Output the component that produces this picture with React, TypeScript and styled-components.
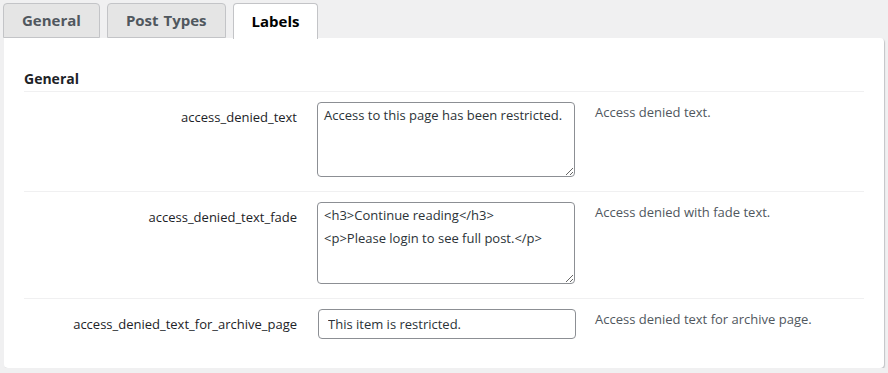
import styled, { createGlobalStyle } from "styled-components";

const GlobalStyle = createGlobalStyle`
  html, body {
    margin: 0;
    padding: 0;
    background: #f0f0f1;
  }
  body {
    font-family: "Open Sans", "Noto Sans", sans-serif;
    font-size: 13px;
    color: #1d2327;
  }
`;

type Field = {
  name: string;
  kind: "textarea" | "input";
  value: string;
  height?: number;
  description: string;
};

const fields: Field[] = [
  {
    name: "access_denied_text",
    kind: "textarea",
    value: "Access to this page has been restricted.",
    height: 75,
    description: "Access denied text.",
  },
  {
    name: "access_denied_text_fade",
    kind: "textarea",
    value: "<h3>Continue reading</h3>\n<p>Please login to see full post.</p>",
    height: 82,
    description: "Access denied with fade text.",
  },
  {
    name: "access_denied_text_for_archive_page",
    kind: "input",
    value: "This item is restricted.",
    description: "Access denied text for archive page.",
  },
];

const tabs = ["General", "Post Types", "Labels"];

export default function App() {
  return (
    <>
      <GlobalStyle />
      <Wrap>
        <TabBar>
          {tabs.map(t => (
            <Tab key={t} $active={t === "Labels"}>
              {t}
            </Tab>
          ))}
        </TabBar>
        <Panel>
          <SectionTitle>General</SectionTitle>
          <FormTable>
            {fields.map(f => (
              <Row key={f.name}>
                <Label>{f.name}</Label>
                <Control>
                  {f.kind === "textarea" ? (
                    <TextArea defaultValue={f.value} style={{ height: f.height }} />
                  ) : (
                    <TextInput defaultValue={f.value} />
                  )}
                </Control>
                <Description>{f.description}</Description>
              </Row>
            ))}
          </FormTable>
        </Panel>
      </Wrap>
    </>
  );
}

const Wrap = styled.div`
  padding: 3px 4px 0 4px;
  width: 880px;
`;

const TabBar = styled.div`
  display: flex;
  gap: 7px;
  margin-left: -1px;
`;

const Tab = styled.div<{ $active?: boolean }>`
  box-sizing: border-box;
  height: ${p => (p.$active ? "36px" : "35px")};
  margin-bottom: ${p => (p.$active ? "-1px" : "0")};
  position: relative;
  z-index: ${p => (p.$active ? 2 : 0)};
  padding: 0 18px 1px;
  display: flex;
  align-items: center;
  font-size: 15px;
  font-weight: 700;
  word-spacing: 1px;
  color: ${p => (p.$active ? "#000" : "#50575e")};
  background: ${p => (p.$active ? "#fff" : "#e5e5e5")};
  border: 1px solid #c3c4c7;
  border-bottom: ${p => (p.$active ? "none" : "1px solid #c3c4c7")};
  border-radius: 4px 4px 0 0;
`;

const Panel = styled.div`
  box-sizing: border-box;
  background: #fff;
  height: 330px;
  border-radius: 0 4px 4px 4px;
  box-shadow: 1px 1px 1px #c3c4c7;
  padding: 30px 20px 0 20px;
  position: relative;
  z-index: 1;
`;

const SectionTitle = styled.h2`
  margin: 0;
  font-size: 14px;
  font-weight: 700;
  color: #1d2327;
  line-height: 22px;
  padding-bottom: 1px;
  border-bottom: 1px solid #f0f0f1;
`;

const FormTable = styled.div`
  display: grid;
  grid-template-columns: 293px 278px 1fr;
`;

const Row = styled.div`
  display: contents;

  & + & > * {
    border-top: 1px solid #f0f0f1;
  }
`;

const Label = styled.div`
  text-align: right;
  padding: 15px 20px 0 0;
  line-height: 20px;
  color: #1d2327;
`;

const Control = styled.div`
  padding: 10px 0 14px 0;
`;

const TextArea = styled.textarea`
  box-sizing: border-box;
  display: block;
  width: 258px;
  padding: 1px 6px;
  font-family: inherit;
  font-size: 13px;
  line-height: 23px;
  color: #2c3338;
  border: 1px solid #8c8f94;
  border-radius: 4px;
  resize: vertical;
  outline: none;
  overflow: hidden;
`;

const TextInput = styled.input`
  box-sizing: border-box;
  display: block;
  width: 258px;
  height: 30px;
  margin-left: 1px;
  padding: 0 9px;
  font-family: inherit;
  font-size: 13px;
  color: #2c3338;
  border: 1px solid #8c8f94;
  border-radius: 4px;
  outline: none;
`;

const Description = styled.div`
  padding: 10px 0 0 0;
  line-height: 20px;
  color: #50575e;
`;
